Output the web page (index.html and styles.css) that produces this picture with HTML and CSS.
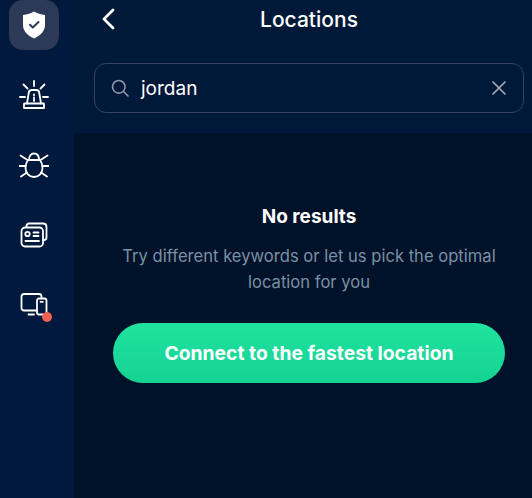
FILE: index.html
```html
<!DOCTYPE html>
<html lang="en">
<head>
    <meta charset="UTF-8">
    <title>Locations</title>
    <link rel="stylesheet" href="styles.css">
</head>
<body>
    <div class="app">
        <nav class="sidebar">
            <div class="nav-item nav-item-active">
                <svg width="26" height="30" viewBox="0 0 26 30">
                    <path d="M13 1.500C16 3.500 20 4.600 24 5V15C24 21 19.500 25.500 13 28.500C6.500 25.500 2 21 2 15V5C6 4.600 10 3.500 13 1.500Z" fill="#fff"/>
                    <path d="M9 14.800 11.800 17.500 17.500 12" fill="none" stroke="#2c3a58" stroke-width="2" stroke-linecap="round" stroke-linejoin="round"/>
                </svg>
            </div>
            <div class="nav-item">
                <svg width="30" height="30" viewBox="0 0 30 30" class="line-icon">
                    <path d="M15 1V6M4.500 4.500 8.500 8.500M25.500 4.500 21.500 8.500M1 17H6M24 17H29"/>
                    <path d="M8 23.500 9.800 12.500C10.100 10.800 11.200 10 12.800 10H17.200C18.800 10 19.900 10.800 20.200 12.500L22 23.500"/>
                    <path d="M15 14.500V15.300M15 17.500V21"/>
                    <path d="M5.500 23.500H24.500C24.800 23.500 25 23.700 25 24V28H5V24C5 23.700 5.200 23.500 5.500 23.500Z"/>
                </svg>
            </div>
            <div class="nav-item">
                <svg width="30" height="26" viewBox="0 0 30 26" class="line-icon">
                    <path d="M10 8C10 4 12 1.500 15 1.500S20 4 20 8"/>
                    <path d="M9 8H21C22.500 10 23.500 13 23.500 16C23.500 21 20 25 15 25S6.500 21 6.500 16C6.500 13 7.500 10 9 8Z"/>
                    <path d="M1.500 3.500 8.500 8M28.500 3.500 21.500 8M0.500 14H6.500M29.500 14H23.500M2 24.500 8 20.500M28 24.500 22 20.500"/>
                </svg>
            </div>
            <div class="nav-item">
                <svg width="28" height="26" viewBox="0 0 28 26" class="line-icon">
                    <path d="M6.500 5V4C6.500 2.500 7.500 1.500 9 1.500H23C25 1.500 26.500 3 26.500 5V15.500C26.500 17 25.500 18 24 18H23"/>
                    <rect x="1.500" y="5.500" width="21.500" height="19" rx="3.500"/>
                    <circle cx="7.500" cy="12" r="2.200"/>
                    <path d="M13.500 10.500H18.500M13.500 14H18.500M5.500 19H19"/>
                </svg>
            </div>
            <div class="nav-item nav-item-badge">
                <svg width="28" height="24" viewBox="0 0 28 24" class="line-icon">
                    <path d="M16.500 17.500H4C2.500 17.500 1.500 16.500 1.500 15V3.500C1.500 2 2.500 1 4 1H19C20.500 1 21.500 2 21.500 3.500V5.500"/>
                    <path d="M8.500 21.500H14"/>
                    <rect x="17" y="5.500" width="9.500" height="16" rx="2"/>
                    <path d="M20.500 8.800H22.800"/>
                </svg>
                <span class="badge"></span>
            </div>
        </nav>

        <main class="content">
            <header class="title-bar">
                <svg class="back" width="14" height="22" viewBox="0 0 14 22">
                    <path d="M12 2 3 11 12 20" fill="none" stroke="#fff" stroke-width="2.800" stroke-linecap="round" stroke-linejoin="round"/>
                </svg>
                <h1>Locations</h1>
            </header>

            <div class="search-wrap">
                <div class="search">
                    <svg width="18" height="18" viewBox="0 0 18 18">
                        <circle cx="7.800" cy="7.800" r="6.300" fill="none" stroke="#8d96a8" stroke-width="1.600"/>
                        <path d="M12.500 12.500 17 17" stroke="#8d96a8" stroke-width="1.600" stroke-linecap="round"/>
                    </svg>
                    <span class="search-text">jordan</span>
                    <svg width="14" height="14" viewBox="0 0 14 14">
                        <path d="M1 1 13 13M13 1 1 13" stroke="#a3aaba" stroke-width="1.700" stroke-linecap="round"/>
                    </svg>
                </div>
            </div>

            <section class="results">
                <h2>No results</h2>
                <p>Try different keywords or let us pick the optimal location for you</p>
                <button class="connect">Connect to the fastest location</button>
            </section>
        </main>
    </div>
</body>
</html>
```

FILE: styles.css
```css
:root {
    --navy: #011938;
    --dark: #00122a;
    --text: #ffffff;
    --muted: #7b90a3;
}

html, body {
    height: 100%;
}

body {
    margin: 0;
    background-color: var(--navy);
    color: var(--text);
    font-family: 'Inter', 'Liberation Sans', sans-serif;
    overflow: hidden;
}

.app {
    display: flex;
    height: 100%;
}

.sidebar {
    width: 74px;
    flex-shrink: 0;
    display: flex;
    flex-direction: column;
    align-items: center;
    gap: 20px;
    padding-left: 1px;
    box-sizing: border-box;
    background-color: #01193c;
}

.nav-item {
    width: 50px;
    height: 50px;
    margin-right: 7px;
    border-radius: 14px;
    display: flex;
    align-items: center;
    justify-content: center;
    position: relative;
}

.nav-item-active {
    background-color: #2c3a58;
}

.line-icon {
    fill: none;
    stroke: #fff;
    stroke-width: 1.800;
    stroke-linecap: round;
    stroke-linejoin: round;
}

.badge {
    position: absolute;
    left: 33px;
    top: 32px;
    width: 10px;
    height: 10px;
    border-radius: 50%;
    background-color: #f2604f;
}

.content {
    flex: 1;
    display: flex;
    flex-direction: column;
    min-width: 0;
}

.title-bar {
    height: 38px;
    position: relative;
    display: flex;
    align-items: center;
    justify-content: center;
}

.title-bar h1 {
    margin: 0 0 0 12px;
    font-size: 21px;
    font-weight: 500;
}

.back {
    position: absolute;
    left: 27px;
    top: 8px;
}

.search-wrap {
    padding: 25px 8px 20px 20px;
}

.search {
    height: 50px;
    box-sizing: border-box;
    border: 1px solid #34435f;
    border-radius: 12px;
    padding: 0 17px 0 16px;
    display: flex;
    align-items: center;
    gap: 12px;
}

.search-text {
    flex: 1;
    font-size: 19px;
}

.results {
    flex: 1;
    background-color: var(--dark);
    display: flex;
    flex-direction: column;
    align-items: center;
    padding: 73px 27px 0 39px;
}

.results h2 {
    margin: 0;
    font-size: 19px;
    font-weight: 700;
    line-height: 22px;
}

.results p {
    margin: 15px 0 0;
    text-align: center;
    font-size: 16.600px;
    line-height: 26px;
    color: var(--muted);
}

.connect {
    width: 392px;
    height: 60px;
    margin-top: 28px;
    border: none;
    border-radius: 30px;
    background: linear-gradient(#21e29f, #14d293);
    color: var(--text);
    font-family: inherit;
    font-size: 19.300px;
    font-weight: 700;
}
```
